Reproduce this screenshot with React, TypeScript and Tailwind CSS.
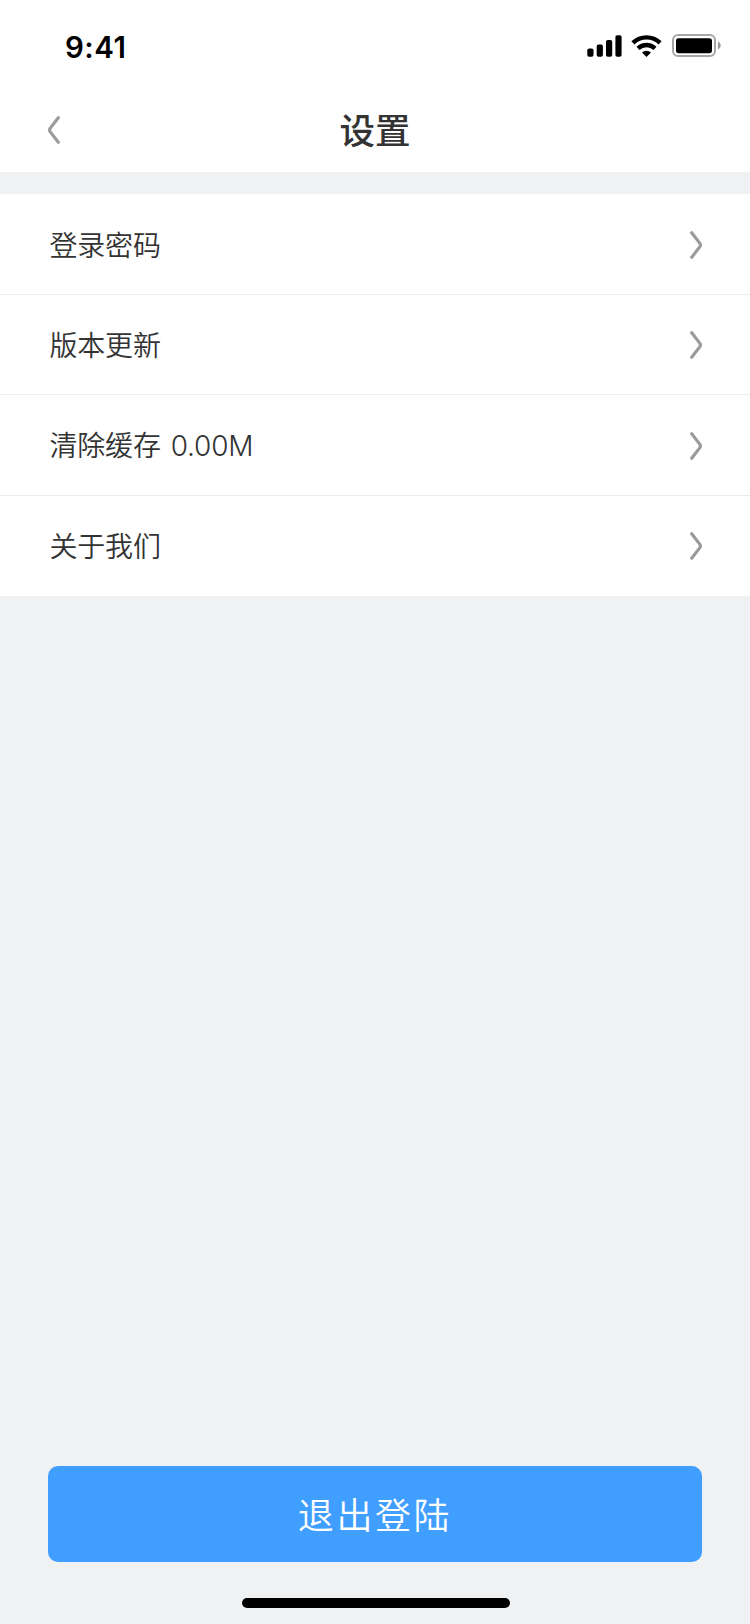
type Setting = {
	id: string
	label: string
	value?: string
	height: string
}

const settings: Setting[] = [
	{ id: "password", label: "登录密码", height: "h-[101px] pt-px" },
	{ id: "update", label: "版本更新", height: "h-[100px] pb-px" },
	{ id: "cache", label: "清除缓存", value: "0.00M", height: "h-[101px]" },
	{ id: "about", label: "关于我们", height: "h-[100px] pb-px" },
]

function SignalIcon() {
	return (
		<svg width="35" height="22" viewBox="0 0 35 22" fill="#000">
			<rect x="0.3" y="13.5" width="6.2" height="8.2" rx="1.8" />
			<rect x="9.7" y="9.6" width="6.2" height="12.1" rx="1.8" />
			<rect x="19" y="5" width="6.2" height="16.7" rx="1.8" />
			<rect x="28.4" y="0.2" width="6.2" height="21.5" rx="1.8" />
		</svg>
	)
}

function WifiIcon() {
	return (
		<svg width="31" height="22" viewBox="0 0 31 22" fill="none" stroke="#000" strokeWidth="4.4">
			<path d="M1.9 7.9a19.6 19.6 0 0 1 27.2 0" />
			<path d="M7 13.3a12.4 12.4 0 0 1 17 0" />
			<path d="M15.5 21.9l-4.5-4.4a6.6 6.6 0 0 1 9 0z" fill="#000" stroke="none" />
		</svg>
	)
}

function BatteryIcon() {
	return (
		<svg width="49" height="23" viewBox="0 0 49 23" fill="none">
			<rect x="1" y="1" width="42" height="21" rx="5" stroke="#000" strokeOpacity="0.35" strokeWidth="2" />
			<rect x="4" y="4.2" width="36" height="15" rx="2.6" fill="#000" />
			<path d="M46 7.6c1.6.7 2.7 2.2 2.7 3.9s-1.1 3.2-2.7 3.9z" fill="#000" fillOpacity="0.4" />
		</svg>
	)
}

function Chevron({ className }: { className?: string }) {
	return (
		<svg
			className={className}
			width="12"
			height="28"
			viewBox="0 0 12 28"
			fill="none"
			stroke="#9b9b9b"
			strokeWidth="3.2"
			strokeLinecap="round"
			strokeLinejoin="round"
		>
			<path d="M1.7 1.7l8.2 10.7q1 1.6 0 3.2L1.7 26.3" />
		</svg>
	)
}

function StatusBar() {
	return (
		<div className="flex h-[88px] items-start justify-between pl-[65px] pr-[29px] pt-[34px]">
			<span className="font-['Inter'] text-[29.5px] leading-[27px] font-semibold tracking-[0.5px] text-black">9:41</span>
			<div className="flex items-start">
				<div className="pt-[1px]">
					<SignalIcon />
				</div>
				<div className="ml-[9px] pt-[1px]">
					<WifiIcon />
				</div>
				<div className="ml-[10px]">
					<BatteryIcon />
				</div>
			</div>
		</div>
	)
}

function NavBar() {
	return (
		<div className="grid h-[84px] grid-cols-[1fr_auto_1fr] items-center px-12">
			<button aria-label="返回" className="justify-self-start">
				<Chevron className="rotate-180" />
			</button>
			<h1 className="pb-[2px] text-[35.5px] font-medium leading-[50px]">设置</h1>
		</div>
	)
}

export default function App() {
	return (
		<div className="flex h-[1624px] w-[750px] flex-col bg-[#eff1f3] font-['Noto_Sans_CJK_SC',sans-serif] text-[#333]">
			<header className="bg-white">
				<StatusBar />
				<NavBar />
			</header>

			<ul className="mt-[22px] divide-y divide-[#ececec] bg-white">
				{settings.map((item) => (
					<li key={item.id} className={`flex items-center justify-between pr-12 pl-[49.5px] ${item.height}`}>
						<span className="flex items-baseline text-[28px] leading-[39px] font-[350] tracking-[-0.2px]">
							{item.label}
							{item.value && <span className="ml-[10px] font-['Inter'] font-[350]">{item.value}</span>}
						</span>
						<Chevron className="mt-[1px]" />
					</li>
				))}
			</ul>

			<footer className="mt-auto flex flex-col items-center px-12 pb-4">
				<button className="h-24 w-full rounded-[10px] bg-[#409eff] pb-[2px] text-[36px] font-[350] tracking-[2.6px] text-white">
					退出登陆
				</button>
				<div className="mt-9 ml-[2px] h-[10px] w-[268px] rounded-full bg-black" />
			</footer>
		</div>
	)
}
